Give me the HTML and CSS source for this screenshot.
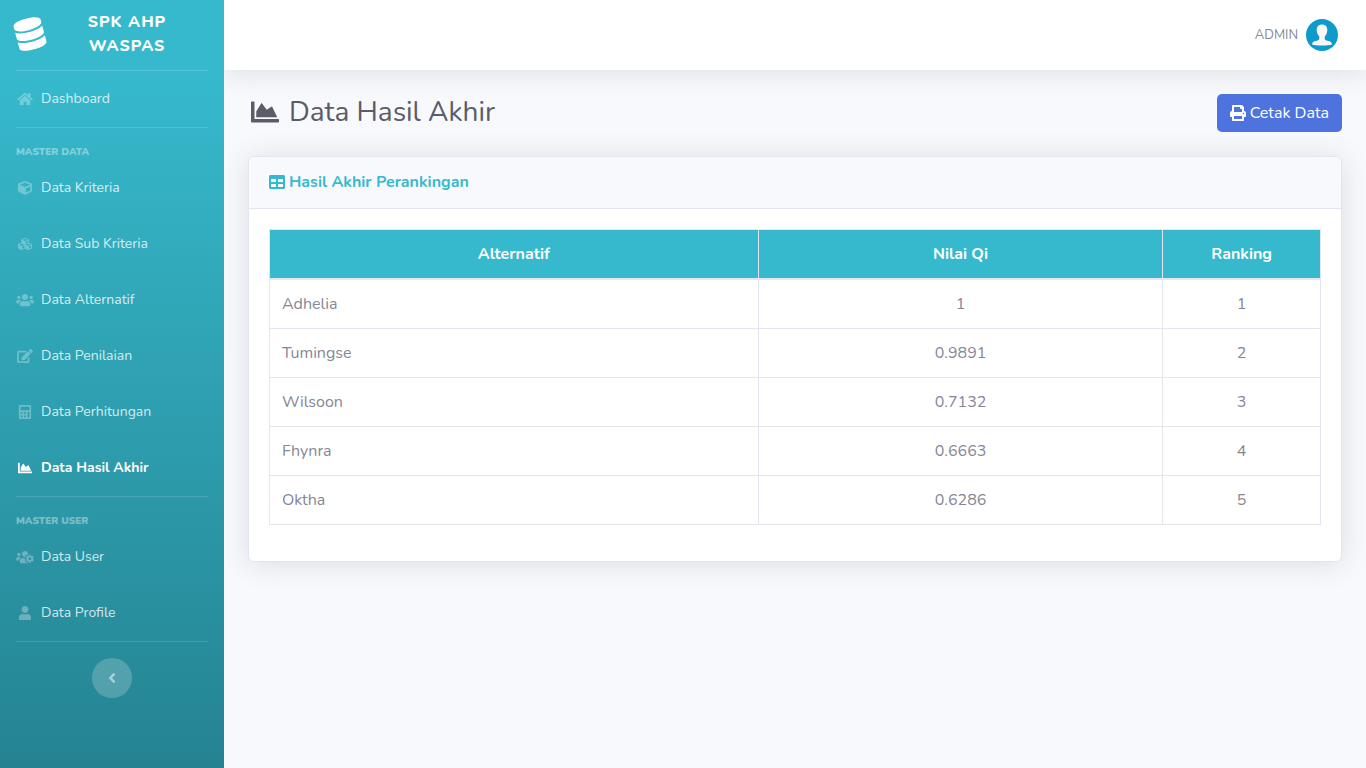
FILE: index.html
```html
<!DOCTYPE html>
<html lang="id">
<head>
<meta charset="utf-8">
<meta name="viewport" content="width=device-width, initial-scale=1">
<title>Data Hasil Akhir</title>
<link rel="stylesheet" href="styles.css">
</head>
<body>
<div class="wrapper">
  <nav class="sidebar" aria-label="Menu utama">
    <a class="brand" href="#">
      <svg class="brand-icon" viewBox="0 0 448 512" aria-hidden="true"><path d="M448 73.143v45.714C448 159.143 347.667 192 224 192S0 159.143 0 118.857V73.143C0 32.857 100.333 0 224 0s224 32.857 224 73.143zM448 176v102.857C448 319.143 347.667 352 224 352S0 319.143 0 278.857V176c48.125 33.143 136.208 48.572 224 48.572S399.874 209.143 448 176zm0 160v102.857C448 479.143 347.667 512 224 512S0 479.143 0 438.857V336c48.125 33.143 136.208 48.572 224 48.572S399.874 369.143 448 336z"/></svg>
      <span class="brand-text">SPK AHP WASPAS</span>
    </a>
    <hr class="divider">
    <a class="nav-link" href="#"><svg class="nav-icon" viewBox="0 0 576 512" aria-hidden="true"><path d="M280.37 148.26L96 300.11V464a16 16 0 0 0 16 16l112.06-.29a16 16 0 0 0 15.92-16V368a16 16 0 0 1 16-16h64a16 16 0 0 1 16 16v95.64a16 16 0 0 0 16 16.05L464 480a16 16 0 0 0 16-16V300L295.67 148.26a12.19 12.19 0 0 0-15.3 0zM571.6 251.47L488 182.56V44.05a12 12 0 0 0-12-12h-56a12 12 0 0 0-12 12v72.61L318.47 43a48 48 0 0 0-61 0L4.34 251.47a12 12 0 0 0-1.6 16.9l25.5 31A12 12 0 0 0 45.15 301l235.22-193.74a12.19 12.19 0 0 1 15.3 0L530.9 301a12 12 0 0 0 16.9-1.6l25.5-31a12 12 0 0 0-1.7-16.93z"/></svg><span>Dashboard</span></a>
    <hr class="divider">
    <h2 class="nav-heading">Master Data</h2>
    <a class="nav-link" href="#"><svg class="nav-icon" viewBox="0 0 512 512" aria-hidden="true"><path d="M239.1 6.3l-208 78c-18.7 7-31.1 25-31.1 45v225.1c0 18.2 10.3 34.8 26.5 42.9l208 104c13.5 6.8 29.4 6.8 42.9 0l208-104c16.3-8.1 26.5-24.8 26.5-42.9V129.3c0-20-12.4-37.9-31.1-44.9l-208-78C262 2.2 250 2.2 239.1 6.3zM256 68.4l192 72v1.1l-192 78-192-78v-1.1l192-72zm32 356V275.5l160-65v133.9l-160 80z"/></svg><span>Data Kriteria</span></a>
    <a class="nav-link" href="#"><svg class="nav-icon" viewBox="0 0 512 512" aria-hidden="true"><path d="M488.6 250.2L392 214V105.5c0-15-9.3-28.4-23.4-33.7l-100-37.5c-8.1-3.1-17.1-3.1-25.3 0l-100 37.5c-14.1 5.3-23.4 18.7-23.4 33.7V214l-96.6 36.2C9.3 255.5 0 268.9 0 283.9V394c0 13.6 7.7 26.1 19.9 32.2l100 50c10.1 5.1 22.1 5.1 32.2 0l103.9-52 103.9 52c10.1 5.1 22.1 5.1 32.2 0l100-50c12.2-6.1 19.9-18.6 19.9-32.2V283.9c0-15-9.3-28.4-23.4-33.7zM358 214.8l-85 31.9v-68.2l85-37v73.3zM154 104.1l102-38.2 102 38.2v.6l-102 41.4-102-41.4v-.6zm84 291.1l-85 42.5v-79.1l85-38.8v75.4zm0-112l-102 41.4-102-41.4v-.6l102-38.2 102 38.2v.6zm240 112l-85 42.5v-79.1l85-38.8v75.4zm0-112l-102 41.4-102-41.4v-.6l102-38.2 102 38.2v.6z"/></svg><span>Data Sub Kriteria</span></a>
    <a class="nav-link" href="#"><svg class="nav-icon" viewBox="0 0 640 512" aria-hidden="true"><path d="M96 224c35.3 0 64-28.7 64-64s-28.7-64-64-64-64 28.7-64 64 28.7 64 64 64zm448 0c35.3 0 64-28.7 64-64s-28.7-64-64-64-64 28.7-64 64 28.7 64 64 64zm32 32h-64c-17.6 0-33.5 7.1-45.1 18.6 40.3 22.1 68.9 62 75.1 109.4h66c17.7 0 32-14.3 32-32v-32c0-35.3-28.7-64-64-64zm-256 0c61.9 0 112-50.1 112-112S381.9 32 320 32 208 82.1 208 144s50.1 112 112 112zm76.8 32h-8.3c-20.8 10-43.9 16-68.5 16s-47.6-6-68.5-16h-8.3C179.6 288 128 339.6 128 403.2V432c0 26.5 21.5 48 48 48h288c26.5 0 48-21.5 48-48v-28.8c0-63.6-51.6-115.2-115.2-115.2zm-223.7-13.4C161.5 263.1 145.6 256 128 256H64c-35.3 0-64 28.7-64 64v32c0 17.7 14.3 32 32 32h65.9c6.3-47.4 34.9-87.3 75.2-109.4z"/></svg><span>Data Alternatif</span></a>
    <a class="nav-link" href="#"><svg class="nav-icon" viewBox="0 0 576 512" aria-hidden="true"><path d="M402.6 83.2l90.2 90.2c3.8 3.8 3.8 10 0 13.8L274.4 405.6l-92.8 10.3c-12.4 1.4-22.9-9.1-21.5-21.5l10.3-92.8L388.8 83.2c3.8-3.8 10-3.8 13.8 0zm162-22.9l-48.8-48.8c-15.2-15.2-39.9-15.2-55.2 0l-35.4 35.4c-3.8 3.8-3.8 10 0 13.8l90.2 90.2c3.8 3.8 10 3.8 13.8 0l35.4-35.4c15.2-15.3 15.2-40 0-55.2zM384 346.2V448H64V128h229.8c3.2 0 6.2-1.3 8.5-3.5l40-40c7.6-7.6 2.2-20.5-8.5-20.5H48C21.5 64 0 85.5 0 112v352c0 26.5 21.5 48 48 48h352c26.5 0 48-21.5 48-48V306.2c0-10.7-12.9-16-20.5-8.5l-40 40c-2.2 2.3-3.5 5.3-3.5 8.5z"/></svg><span>Data Penilaian</span></a>
    <a class="nav-link" href="#"><svg class="nav-icon" viewBox="0 0 448 512" aria-hidden="true"><path fill-rule="evenodd" d="M48 0h352c26 0 48 22 48 48v416c0 26-22 48-48 48H48c-26 0-48-22-48-48V48C0 22 22 0 48 0zM77 64c-7 0-13 6-13 13v102c0 7 6 13 13 13h294c7 0 13-6 13-13V77c0-7-6-13-13-13zM64 256h64v64H64zM192 256h64v64h-64zM320 256h64v192h-64zM64 384h64v64H64zM192 384h64v64h-64z"/></svg><span>Data Perhitungan</span></a>
    <a class="nav-link active" href="#" aria-current="page"><svg class="nav-icon" viewBox="0 0 512 512" aria-hidden="true"><path d="M500 384c6.6 0 12 5.4 12 12v40c0 6.6-5.4 12-12 12H12c-6.6 0-12-5.4-12-12V76c0-6.6 5.4-12 12-12h40c6.6 0 12 5.4 12 12v308h436zM372.7 159.5L288 216l-85.3-113.7c-5.1-6.8-15.5-6.3-19.9 1L96 248v104h384l-89.9-187.8c-3.2-6.5-11.4-8.7-17.4-4.7z"/></svg><span>Data Hasil Akhir</span></a>
    <hr class="divider">
    <h2 class="nav-heading">Master User</h2>
    <a class="nav-link" href="#"><svg class="nav-icon" viewBox="0 0 640 512" aria-hidden="true"><path d="M610.5 341.3c2.6-14.1 2.6-28.5 0-42.6l25.8-14.9c3-1.7 4.3-5.2 3.3-8.5-6.7-21.6-18.2-41.2-33.2-57.4-2.3-2.5-6-3.1-9-1.4l-25.8 14.9c-10.9-9.3-23.4-16.5-36.9-21.3v-29.8c0-3.4-2.4-6.4-5.7-7.1-22.3-5-45-4.8-66.2 0-3.3.7-5.7 3.7-5.7 7.1v29.8c-13.5 4.8-26 12-36.9 21.3l-25.8-14.9c-2.9-1.7-6.7-1.1-9 1.4-15 16.2-26.5 35.8-33.2 57.4-1 3.3.4 6.8 3.3 8.5l25.8 14.9c-2.6 14.1-2.6 28.5 0 42.6l-25.8 14.9c-3 1.7-4.3 5.2-3.3 8.5 6.7 21.6 18.2 41.1 33.2 57.4 2.3 2.5 6 3.1 9 1.4l25.8-14.9c10.9 9.3 23.4 16.5 36.9 21.3v29.8c0 3.4 2.4 6.4 5.7 7.1 22.3 5 45 4.8 66.2 0 3.3-.7 5.7-3.7 5.7-7.1v-29.8c13.5-4.8 26-12 36.9-21.3l25.8 14.9c2.9 1.7 6.7 1.1 9-1.4 15-16.2 26.5-35.8 33.2-57.4 1-3.3-.4-6.8-3.3-8.5l-25.8-14.9zM496 368.5c-26.8 0-48.5-21.8-48.5-48.5s21.8-48.5 48.5-48.5 48.5 21.8 48.5 48.5-21.7 48.5-48.5 48.5zM96 224c35.3 0 64-28.7 64-64s-28.7-64-64-64-64 28.7-64 64 28.7 64 64 64zm224 32c1.9 0 3.7-.5 5.6-.6 8.3-21.7 20.5-42.1 36.3-59.2 7.4-8 17.9-12.6 28.9-12.6 6.9 0 13.7 1.8 19.6 5.3l7.9 4.6c.8-.5 1.6-.9 2.4-1.4 7-14.6 11.2-30.8 11.2-48 0-61.9-50.1-112-112-112S208 82.1 208 144c0 61.9 50.1 112 112 112zm105.2 194.5c-2.3-1.2-4.6-2.6-6.8-3.9-8.2 4.8-15.3 9.8-27.5 9.8-10.9 0-21.4-4.6-28.9-12.6-18.3-19.8-32.3-43.9-40.2-69.6-10.7-34.5 24.9-49.7 25.8-50.3-.1-2.6-.1-5.2 0-7.8l-7.9-4.6c-3.8-2.2-7-5-9.8-8.1-3.3.2-6.5.6-9.8.6-24.6 0-47.6-6-68.5-16h-8.3C179.6 288 128 339.6 128 403.2V432c0 26.5 21.5 48 48 48h255.4c-3.7-6-6.2-12.8-6.2-20.3v-9.2zM173.1 274.6C161.5 263.1 145.6 256 128 256H64c-35.3 0-64 28.7-64 64v32c0 17.7 14.3 32 32 32h65.9c6.3-47.4 34.9-87.3 75.2-109.4z"/></svg><span>Data User</span></a>
    <a class="nav-link" href="#"><svg class="nav-icon" viewBox="0 0 448 512" aria-hidden="true"><path d="M224 256c70.7 0 128-57.3 128-128S294.7 0 224 0 96 57.3 96 128s57.3 128 128 128zm89.6 32h-16.7c-22.2 10.2-46.9 16-72.9 16s-50.6-5.8-72.9-16h-16.7C60.2 288 0 348.2 0 422.4V464c0 26.5 21.5 48 48 48h352c26.5 0 48-21.5 48-48v-41.6c0-74.2-60.2-134.4-134.4-134.4z"/></svg><span>Data Profile</span></a>
    <hr class="divider">
    <button class="toggle" type="button" aria-label="Ciutkan menu"><svg class="toggle-icon" viewBox="0 0 256 512" aria-hidden="true"><path d="M31.7 239l136-136c9.4-9.4 24.6-9.4 33.9 0l22.6 22.6c9.4 9.4 9.4 24.6 0 33.9L127.9 256l96.4 96.4c9.4 9.4 9.4 24.6 0 33.9L201.7 409c-9.4 9.4-24.6 9.4-33.9 0l-136-136c-9.5-9.4-9.5-24.6-.1-34z"/></svg></button>
  </nav>
  <div class="content">
    <header class="topbar">
      <a class="profile" href="#">
        <span class="profile-name">ADMIN</span>
        <svg class="avatar" viewBox="0 0 32 32" aria-hidden="true"><circle class="avatar-bg" cx="16" cy="16" r="16"/><path class="avatar-person" d="M16 5.500c-3.400 0-5.300 2.200-5.300 5.300 0 1.600.3 2.700.7 3.800.5 1.500 1.300 2.300 1.900 3v2.200c0 .9-.6 1.300-1.600 1.600l-3.200.9c-1.500.4-2.400 1.600-2.400 3.100 2.400.8 6 1.100 9.900 1.100s7.500-.3 9.900-1.100c0-1.500-.9-2.700-2.400-3.100l-3.200-.9c-1-.3-1.600-.7-1.600-1.600v-2.200c.6-.7 1.400-1.500 1.900-3 .4-1.100.7-2.200.7-3.800 0-3.100-1.900-5.300-5.300-5.300z"/></svg>
      </a>
    </header>
    <main class="main">
      <div class="page-head">
        <h1 class="page-title"><svg class="title-icon" viewBox="0 0 512 512" aria-hidden="true"><path d="M500 384c6.6 0 12 5.4 12 12v40c0 6.6-5.4 12-12 12H12c-6.6 0-12-5.4-12-12V76c0-6.6 5.4-12 12-12h40c6.6 0 12 5.4 12 12v308h436zM372.7 159.5L288 216l-85.3-113.7c-5.1-6.8-15.5-6.3-19.9 1L96 248v104h384l-89.9-187.8c-3.2-6.5-11.4-8.7-17.4-4.7z"/></svg>Data Hasil Akhir</h1>
        <a class="btn" href="#"><svg class="icon" viewBox="0 0 512 512" aria-hidden="true"><path d="M448 192V77.25c0-8.49-3.37-16.62-9.37-22.63L393.37 9.37c-6-6-14.14-9.37-22.63-9.37H96C78.33 0 64 14.33 64 32v160c-35.35 0-64 28.65-64 64v112c0 8.84 7.16 16 16 16h48v96c0 17.67 14.33 32 32 32h320c17.67 0 32-14.33 32-32v-96h48c8.84 0 16-7.16 16-16V256c0-35.35-28.65-64-64-64zm-64 256H128v-96h256v96zm0-224H128V64h192v48c0 8.84 7.16 16 16 16h48v96zm48 72c-13.25 0-24-10.75-24-24 0-13.26 10.75-24 24-24s24 10.74 24 24c0 13.25-10.75 24-24 24z"/></svg>Cetak Data</a>
      </div>
      <section class="card">
        <h2 class="card-head"><svg class="icon" viewBox="0 0 512 512" aria-hidden="true"><path d="M464 32H48C21.490 32 0 53.490 0 80v352c0 26.510 21.490 48 48 48h416c26.510 0 48-21.490 48-48V80c0-26.510-21.490-48-48-48zM224 416H64v-96h160v96zm0-160H64v-96h160v96zm224 160H288v-96h160v96zm0-160H288v-96h160v96z"/></svg>Hasil Akhir Perankingan</h2>
        <div class="card-body">
          <table class="table">
            <colgroup><col class="col-name"><col class="col-value"><col class="col-rank"></colgroup>
            <thead><tr><th scope="col">Alternatif</th><th scope="col">Nilai Qi</th><th scope="col">Ranking</th></tr></thead>
            <tbody>
              <tr><td class="name">Adhelia</td><td>1</td><td>1</td></tr>
              <tr><td class="name">Tumingse</td><td>0.9891</td><td>2</td></tr>
              <tr><td class="name">Wilsoon</td><td>0.7132</td><td>3</td></tr>
              <tr><td class="name">Fhynra</td><td>0.6663</td><td>4</td></tr>
              <tr><td class="name">Oktha</td><td>0.6286</td><td>5</td></tr>
            </tbody>
          </table>
        </div>
      </section>
    </main>
  </div>
</div>
</body>
</html>
```
FILE: styles.css
```css
*, *::before, *::after { box-sizing: border-box; }
body {
  margin: 0;
  font-family: Nunito, "Open Sans", "Noto Sans", sans-serif;
  font-size: 16px;
  line-height: 24px;
  color: #858796;
  background: #f8f9fc;
}
a { color: inherit; text-decoration: none; }
h1, h2 { margin: 0; }
svg { fill: currentColor; flex: none; }
.wrapper { display: flex; min-height: 100vh; }

.sidebar {
  flex: none;
  width: 224px;
  display: flex;
  flex-direction: column;
  color: #fff;
  background: linear-gradient(180deg, #36b9cc 10%, #258391 100%);
}
.brand {
  display: flex;
  align-items: center;
  height: 70px;
  padding: 0 16px 2px 14px;
  font-weight: 800;
  text-align: center;
}
.brand-icon { width: 32px; height: 32px; transform: rotate(-15deg); }
.brand-text { flex: 1; padding: 0 36px; letter-spacing: 1px; }
.divider {
  flex: none;
  width: calc(100% - 32px);
  height: 1px;
  margin: 0 16px;
  border: 0;
  background: rgba(255, 255, 255, .15);
}
.nav-heading {
  padding: 0 16px;
  margin-top: 16px;
  font-size: 10px;
  line-height: 16px;
  font-weight: 900;
  text-transform: uppercase;
  color: rgba(255, 255, 255, .4);
}
.nav-link {
  display: flex;
  align-items: center;
  gap: 7px;
  padding: 16px;
  font-size: 14px;
  color: rgba(255, 255, 255, .8);
}
.nav-icon { width: 18px; height: 14px; opacity: .375; }
.nav-link.active { font-weight: 700; color: #fff; }
.nav-link.active .nav-icon { opacity: 1; }
.toggle {
  display: grid;
  place-items: center;
  width: 40px;
  height: 40px;
  margin: 16px auto;
  padding: 0;
  border: 0;
  border-radius: 50%;
  color: rgba(255, 255, 255, .5);
  background: rgba(255, 255, 255, .2);
}
.toggle-icon { width: 8px; height: 16px; }

.content { flex: 1; min-width: 0; overflow: hidden; }
.topbar {
  display: flex;
  align-items: center;
  justify-content: flex-end;
  height: 70px;
  padding: 0 28px;
  background: #fff;
  box-shadow: 0 2px 28px rgba(58, 59, 69, .15);
}
.profile { display: flex; align-items: center; gap: 8px; font-size: 13px; }
.avatar { width: 32px; height: 32px; }
.avatar-bg { fill: #0e9acb; }
.avatar-person { fill: #fcf7f7; }

.main { padding: 24px; }
.page-head {
  display: flex;
  align-items: center;
  justify-content: space-between;
  margin-bottom: 24px;
}
.page-title {
  display: flex;
  align-items: center;
  gap: 10px;
  padding: 0 0 2px 3px;
  font-size: 28px;
  line-height: 34px;
  font-weight: 400;
  color: #5a5c69;
}
.title-icon { width: 28px; height: 28px; }
.icon { width: 16px; height: 16px; }
.btn {
  display: flex;
  align-items: center;
  gap: 4px;
  padding: 7px 13px;
  border-radius: 5px;
  color: #fff;
  background: #4e73df;
}
.card {
  border: 1px solid #e3e6f0;
  border-radius: 6px;
  background: #fff;
  box-shadow: 0 2px 28px rgba(58, 59, 69, .15);
}
.card-head {
  display: flex;
  align-items: center;
  gap: 4px;
  padding: 13px 20px 14px;
  border-bottom: 1px solid #e3e6f0;
  border-radius: 5px 5px 0 0;
  font-size: 16px;
  font-weight: 700;
  color: #36b9cc;
  background: #f8f9fc;
}
.card-body { padding: 20px 20px 36px; }
.table {
  width: 100%;
  table-layout: fixed;
  border-collapse: collapse;
  border: 1px solid #e3e6f0;
}
.col-name { width: 46.5%; }
.col-value { width: 38.5%; }
.col-rank { width: 15%; }
.table th, .table td { padding: 12px; border: 1px solid #e3e6f0; text-align: center; }
.table th { border-bottom-width: 2px; font-weight: 700; color: #fff; background: #36b9cc; }
.table .name { text-align: left; }
```
